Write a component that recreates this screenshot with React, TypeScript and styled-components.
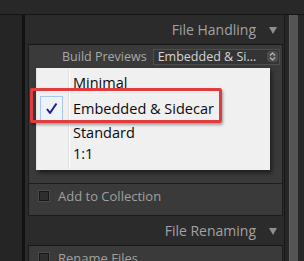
import styled, { createGlobalStyle } from "styled-components"

const Global = createGlobalStyle`
  html, body {
    margin: 0;
    padding: 0;
    background: #2b2b2b;
    overflow: hidden;
  }
`

const Frame = styled.div`
  position: relative;
  width: 304px;
  height: 261px;
  display: flex;
  flex-direction: column;
  background: #2b2b2b;
  font-family: "Open Sans", "Noto Sans", sans-serif;
  overflow: hidden;
`

const TopStrip = styled.div`
  height: 14px;
  flex: none;
  background: #282828;
  border-bottom: 1px solid #141414;
`

const Body = styled.div`
  flex: 1;
  display: flex;
  min-height: 0;
`

const LeftColumn = styled.div`
  width: 22px;
  flex: none;
  background: #252525;
  border-right: 3px solid #121212;
`

const Main = styled.div`
  flex: 1;
  display: flex;
  flex-direction: column;
  padding: 0 1px 0 3px;
`

const Scroll = styled.div`
  width: 20px;
  flex: none;
  display: flex;
  background: #262626;
  padding: 0 6px 0 4px;
  box-sizing: border-box;
  border-left: 1px solid #181818;
`

const Thumb = styled.div`
  flex: 1;
  background: #555;
  border-left: 1px solid #606060;
`

const SectionHeader = styled.div`
  height: 29px;
  flex: none;
  display: flex;
  align-items: center;
  justify-content: flex-end;
  gap: 13px;
  padding-right: 6px;
  color: #a2a2a2;
  font-size: 14px;
`

const Triangle = styled.span`
  width: 0;
  height: 0;
  border-left: 4px solid transparent;
  border-right: 4px solid transparent;
  border-top: 7px solid #8e8e8e;
  margin-top: 2px;
`

const Box = styled.div`
  flex: none;
  background: #3a3a3a;
  border: 1px solid #1c1c1c;
  border-top-color: #161616;
`

const PreviewRow = styled.div`
  height: 23px;
  display: flex;
  align-items: center;
  padding-left: 33px;
  gap: 6px;
`

const Label = styled.span`
  color: #a9a9a9;
  font-size: 12.5px;
  white-space: nowrap;
`

const Select = styled.div`
  width: 120px;
  height: 14px;
  display: flex;
  align-items: center;
  justify-content: space-between;
  border: 1px solid #4e4e4e;
  background: #343434;
  padding: 0 1px 0 4px;
  color: #d6d6d6;
  font-size: 12.5px;
  white-space: nowrap;
`

const Stepper = styled.span`
  width: 11px;
  height: 11px;
  display: flex;
  align-items: center;
  justify-content: center;
  background: #4c4c4c;
  border-radius: 3px;
`

const Hidden = styled.div`
  height: 115px;
  border-bottom: 1px solid #1e1e1e;
  background: #3a3a3a;
`

const CheckRow = styled.div`
  height: 31px;
  display: flex;
  align-items: flex-start;
  gap: 9px;
  padding: 6px 0 0 10px;
  box-sizing: border-box;
  color: #a0a0a0;
  font-size: 13px;
`

const CheckBox = styled.span`
  width: 8px;
  height: 8px;
  margin-top: 1px;
  flex: none;
  background: #2e2e2e;
  border: 1px solid #171717;
  box-shadow: 0 0 0 1px #4a4a4a;
`

const RowText = styled.span`
  line-height: 12px;
  white-space: nowrap;
`

const Menu = styled.div`
  position: absolute;
  left: 36px;
  top: 68px;
  width: 234px;
  height: 102px;
  box-sizing: border-box;
  padding-top: 3px;
  background: #f0f0f0;
  border-left: 1px solid #e4e4e4;
  box-shadow: 2px 3px 4px rgba(0, 0, 0, 0.5);
  font-family: "Open Sans", "Noto Sans", sans-serif;
`

const Gutter = styled.div`
  position: absolute;
  left: 31px;
  top: 2px;
  bottom: 2px;
  width: 1px;
  background: #e0e0e0;
  border-right: 1px solid #fff;
`

const Item = styled.div<{ $h: number }>`
  height: ${(p) => p.$h}px;
  display: flex;
  align-items: center;
  padding-left: 36px;
  position: relative;
  color: #0a0a0a;
  font-size: 14.5px;
  white-space: nowrap;
`

const CheckMark = styled.span`
  position: absolute;
  left: 3px;
  top: 2px;
  width: 21px;
  height: 23px;
  display: flex;
  align-items: center;
  justify-content: center;
  background: #eef3fa;
  border: 1px solid #a9c7ea;
`

const Highlight = styled.div`
  position: absolute;
  left: 30px;
  top: 88px;
  width: 192px;
  height: 35px;
  box-sizing: border-box;
  border: 3px solid #e13c3d;
  border-radius: 2px;
  box-shadow: 1px 2px 3px rgba(0, 0, 0, 0.35);
`

export default function App() {
  const items = [
    { label: "Minimal", h: 23 },
    { label: "Embedded & Sidecar", h: 28, checked: true },
    { label: "Standard", h: 21 },
    { label: "1:1", h: 21 },
  ]
  return (
    <Frame>
      <Global />
      <TopStrip />
      <Body>
        <LeftColumn />
        <Main>
          <SectionHeader>
            File Handling
            <Triangle />
          </SectionHeader>
          <Box>
            <PreviewRow>
              <Label>Build Previews</Label>
              <Select>
                Embedded &amp; Si...
                <Stepper>
                  <svg width="7" height="9" viewBox="0 0 7 9">
                    <path d="M1 3.5 L3.5 1 L6 3.5 M1 5.5 L3.5 8 L6 5.5" stroke="#b8b8b8" strokeWidth="1.1" fill="none" />
                  </svg>
                </Stepper>
              </Select>
            </PreviewRow>
            <Hidden />
            <CheckRow>
              <CheckBox />
              <RowText>Add to Collection</RowText>
            </CheckRow>
          </Box>
          <SectionHeader>
            File Renaming
            <Triangle />
          </SectionHeader>
          <Box>
            <CheckRow>
              <CheckBox />
              <RowText>Rename Files</RowText>
            </CheckRow>
          </Box>
        </Main>
        <Scroll>
          <Thumb />
        </Scroll>
      </Body>
      <Menu>
        <Gutter />
        {items.map((it) => (
          <Item key={it.label} $h={it.h}>
            {it.checked && (
              <CheckMark>
                <svg width="13" height="13" viewBox="0 0 13 13">
                  <path d="M2 7 L5 11 L11.5 1.5" stroke="#1b1d8f" strokeWidth="2" fill="none" strokeLinejoin="round" />
                </svg>
              </CheckMark>
            )}
            {it.label}
          </Item>
        ))}
      </Menu>
      <Highlight />
    </Frame>
  )
}
